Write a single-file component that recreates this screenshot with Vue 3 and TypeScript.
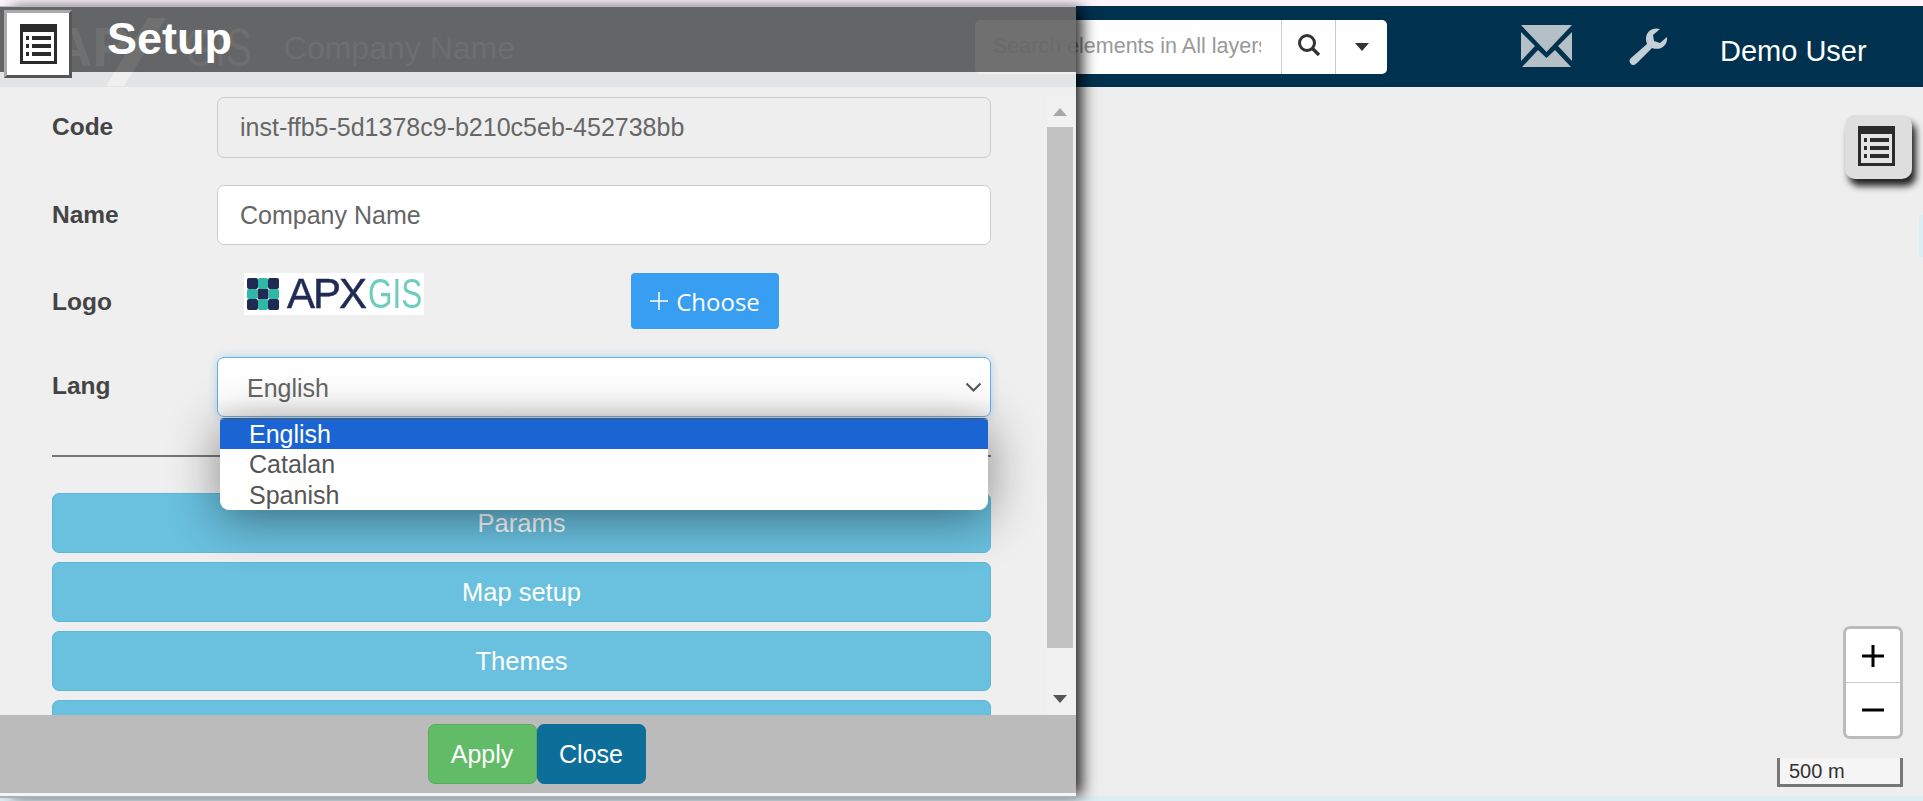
<script setup lang="ts">
const sections: string[] = ['Params', 'Map setup', 'Themes', '']
const languages: string[] = ['English', 'Catalan', 'Spanish']
const selected = 'English'
const iconRows: number[] = [12, 20, 28]
</script>

<template>
  <div class="page">
    <div class="top-strip"></div>
    <header class="navbar">
      <div class="brand">
        <span class="brand-apx">AP</span>
        <svg class="brand-slash" width="60" height="68" viewBox="0 0 60 68"><path d="M0 68 L42 0 H60 L18 68 Z" fill="#fff" /></svg>
        <span class="brand-gis">GIS</span>
        <span class="brand-company">Company Name</span>
      </div>
      <div class="search">
        <input class="search-input" placeholder="Search elements in All layers" />
        <button class="search-btn">
          <svg width="24" height="24" viewBox="0 0 24 24"><circle cx="10" cy="10" r="7.5" fill="none" stroke="#333" stroke-width="3" /><path d="M15.5 15.5 L22 22" stroke="#333" stroke-width="3.4" /></svg>
        </button>
        <button class="search-caret">
          <svg width="14" height="8" viewBox="0 0 14 8"><path d="M0 0 H14 L7 8 Z" fill="#333" /></svg>
        </button>
      </div>
      <svg class="nav-mail" width="51" height="42" viewBox="0 0 51 42">
        <path d="M0 0 H51 L25.5 27 Z" fill="#b4bfc6" />
        <path d="M0 7 L14 21 L0 36 Z M51 7 L37 21 L51 36 Z" fill="#b4bfc6" />
        <path d="M1 42 L17 25 L25.5 33 L34 25 L50 42 Z" fill="#b4bfc6" />
      </svg>
      <svg class="nav-wrench" width="39" height="37" viewBox="0 0 39 37">
        <path d="M38 9 L31 15 L25 13 L24 7 L31 1 C24 -1 17 3 17 11 C17 13 17.5 14.5 18 16 L2 30 C0 32 0 34 2 36 C4 38 6 37 8 35 L23 20 C31 23 39 18 38 9 Z" fill="#c5d0d6" />
      </svg>
      <span class="nav-user">Demo User</span>
    </header>

    <main class="map">
      <button class="float-btn">
        <svg width="37" height="40" viewBox="0 0 37 40">
          <rect width="37" height="40" fill="#2b2b2b" />
          <rect x="3" y="8" width="31" height="29" fill="#e4e4e4" />
          <template v-for="y in iconRows" :key="y">
            <rect x="6" :y="y" width="3" height="4" fill="#2b2b2b" />
            <rect x="12" :y="y" width="19" height="4" fill="#2b2b2b" />
          </template>
        </svg>
      </button>
      <div class="zoom-ctl">
        <button class="zoom-btn">
          <svg width="22" height="22" viewBox="0 0 22 22"><path d="M0 11 H22 M11 0 V22" stroke="#000" stroke-width="3" /></svg>
        </button>
        <button class="zoom-btn zoom-out">
          <svg width="22" height="4" viewBox="0 0 22 4"><path d="M0 2 H22" stroke="#000" stroke-width="3" /></svg>
        </button>
      </div>
      <div class="scale-line">500 m</div>
      <div class="edge-tick"></div>
    </main>
    <div class="bottom-strip"></div>

    <section class="panel">
      <div class="panel-head">
        <div class="head-icon">
          <svg width="37" height="40" viewBox="0 0 37 40">
            <rect width="37" height="40" fill="#2b2b2b" />
            <rect x="3" y="8" width="31" height="29" fill="#fff" />
            <template v-for="y in iconRows" :key="y">
              <rect x="6" :y="y" width="3" height="4" fill="#2b2b2b" />
              <rect x="12" :y="y" width="19" height="4" fill="#2b2b2b" />
            </template>
          </svg>
        </div>
        <h1 class="head-title">Setup</h1>
      </div>

      <div class="panel-body">
        <div class="form">
          <div class="row">
            <label class="row-label row-label-code">Code</label>
            <input class="field field-off" value="inst-ffb5-5d1378c9-b210c5eb-452738bb" readonly />
          </div>
          <div class="row row-name">
            <label class="row-label">Name</label>
            <input class="field" value="Company Name" />
          </div>
          <div class="row row-logo">
            <label class="row-label">Logo</label>
            <div class="logo-wrap">
              <div class="logo">
                <svg class="logo-mark" width="32" height="32" viewBox="0 0 32 32">
                  <g fill="#1f2a55">
                    <rect x="0" y="0" width="11" height="11" rx="2" />
                    <rect x="21" y="0" width="11" height="11" rx="2" />
                    <rect x="10.5" y="10.5" width="11" height="11" rx="2" />
                    <rect x="0" y="21" width="11" height="11" rx="2" />
                    <rect x="21" y="21" width="11" height="11" rx="2" />
                  </g>
                  <g fill="#2fb8a6">
                    <rect x="11" y="0" width="10" height="11" rx="2" />
                    <rect x="0" y="11" width="10.5" height="10" rx="2" />
                    <rect x="21.5" y="11" width="10.5" height="10" rx="2" />
                    <rect x="11" y="21" width="10" height="11" rx="2" />
                  </g>
                </svg>
                <span class="logo-apx">APX</span>
                <span class="logo-gis">GIS</span>
              </div>
              <button class="choose">
                <svg width="18" height="18" viewBox="0 0 18 18"><path d="M0 9 H18 M9 0 V18" stroke="#fff" stroke-width="1.5" /></svg>
                <span>Choose</span>
              </button>
            </div>
          </div>
          <div class="row">
            <label class="row-label row-label-lang">Lang</label>
            <div class="select-wrap">
              <div class="select">
                <span class="select-text">{{ selected }}</span>
                <svg width="17" height="10" viewBox="0 0 17 10"><path d="M1.5 1.5 L8.5 8.5 L15.5 1.5" fill="none" stroke="#555" stroke-width="2" /></svg>
              </div>
              <ul class="options">
                <li v-for="lang in languages" :key="lang" class="option" :class="{ active: lang === selected }">{{ lang }}</li>
              </ul>
            </div>
          </div>
          <hr class="divider" />
          <div class="sections">
            <button v-for="s in sections" :key="s" class="section-btn">{{ s }}</button>
          </div>
        </div>
        <div class="scrollbar">
          <svg class="arrow-up" width="14" height="8" viewBox="0 0 14 8"><path d="M7 0 L14 8 H0 Z" fill="#a8a8a8" /></svg>
          <div class="thumb"></div>
          <svg class="arrow-down" width="14" height="8" viewBox="0 0 14 8"><path d="M0 0 H14 L7 8 Z" fill="#555" /></svg>
        </div>
      </div>

      <footer class="panel-foot">
        <button class="foot-btn apply">Apply</button>
        <button class="foot-btn close">Close</button>
      </footer>
    </section>
  </div>
</template>

<style>
html, body { margin: 0; overflow: hidden; }
</style>

<style scoped>
.page {
  position: relative;
  width: 1923px;
  height: 801px;
  display: flex;
  flex-direction: column;
  overflow: hidden;
  font-family: "Liberation Sans", Arial, sans-serif;
  background: #dcedf4;
}

.top-strip {
  height: 6px;
  background: #fdf4fd;
}

.navbar {
  height: 81px;
  background: #00314f;
  display: flex;
  align-items: center;
  position: relative;
}

.brand {
  display: flex;
  align-items: center;
  width: 975px;
  flex: none;
  color: #fff;
  padding-left: 52px;
  box-sizing: border-box;
}

.brand-apx {
  font-size: 56px;
  font-weight: bold;
  line-height: 1;
}

.brand-slash {
  margin: 10px 0 0 -24px;
}

.brand-gis {
  font-size: 54px;
  line-height: 1;
  margin-left: 19px;
  width: 99px;
  color: #ccc;
  transform: scaleX(0.72);
  transform-origin: left center;
}

.brand-company {
  font-size: 32px;
  color: #ccc;
  margin-top: 4px;
}

.search {
  width: 412px;
  height: 54px;
  display: flex;
  background: #fff;
  border-radius: 5px;
  flex: none;
}

.search-input {
  width: 307px;
  box-sizing: border-box;
  border: 0;
  border-right: 1px solid #ccc;
  outline: none;
  background: transparent;
  font: 21.5px "Liberation Sans", Arial, sans-serif;
  padding: 0 20px 0 18px;
  color: #555;
}

.search-input::placeholder {
  color: #999;
}

.search-btn,
.search-caret {
  border: 0;
  padding: 0;
  background: transparent;
  display: flex;
  align-items: center;
  justify-content: center;
}

.search-btn {
  width: 54px;
  border-right: 1px solid #ccc;
  padding-bottom: 4px;
}

.search-caret {
  flex: 1;
}

.nav-mail {
  margin-left: 134px;
  margin-top: -1px;
}

.nav-wrench {
  margin-left: 57px;
  margin-top: 0;
}

.nav-user {
  margin-left: 52px;
  margin-top: 10px;
  font-size: 29px;
  color: #fff;
}

.map {
  flex: none;
  height: 709px;
  background: #eee;
  position: relative;
}

.float-btn {
  position: absolute;
  left: 1845px;
  top: 28px;
  width: 67px;
  height: 64px;
  border: 0;
  padding: 0 5px 3px 0;
  box-sizing: border-box;
  border-radius: 10px;
  background: #dedede;
  box-shadow: 4px 7px 7px #222;
  display: flex;
  align-items: center;
  justify-content: center;
}

.zoom-ctl {
  position: absolute;
  left: 1843px;
  top: 539px;
  width: 60px;
  height: 113px;
  box-sizing: border-box;
  border: 3px solid #bbb;
  border-radius: 7px;
  background: #fff;
  display: flex;
  flex-direction: column;
}

.zoom-btn {
  flex: 1;
  border: 0;
  padding: 0;
  background: transparent;
  display: flex;
  align-items: center;
  justify-content: center;
}

.zoom-out {
  border-top: 1px solid #ccc;
}

.scale-line {
  position: absolute;
  left: 1777px;
  top: 671px;
  width: 126px;
  height: 29px;
  box-sizing: border-box;
  border: 3px solid #777;
  border-top: 0;
  background: #f5f5f5;
  font-size: 20px;
  line-height: 26px;
  padding-left: 9px;
  color: #333;
}

.edge-tick {
  position: absolute;
  right: 0;
  top: 128px;
  width: 4px;
  height: 42px;
  background: #dcedf4;
}

.bottom-strip {
  flex: 1;
}

.panel {
  position: absolute;
  left: 0;
  top: 6px;
  width: 1076px;
  height: 792px;
  display: flex;
  flex-direction: column;
  border-top: 1px solid #bbb;
  border-bottom: 2px solid #aab2b6;
  box-sizing: border-box;
  box-shadow: 9px 0 14px -3px rgba(0, 0, 0, 0.85);
}

.panel-head {
  height: 65px;
  flex: none;
  display: flex;
  align-items: flex-start;
  background: rgba(104, 104, 104, 0.95);
  position: relative;
}

.head-icon {
  position: absolute;
  left: 4px;
  top: 3px;
  width: 68px;
  height: 68px;
  box-sizing: border-box;
  background: #fff;
  border: 3px outset #aaa;
  display: flex;
  align-items: center;
  justify-content: center;
  z-index: 1;
}

.head-title {
  margin: 7px 0 0 107px;
  font-size: 45px;
  line-height: 50px;
  font-weight: bold;
  color: #fff;
}

.panel-body {
  flex: none;
  height: 643px;
  display: flex;
  overflow: hidden;
  background: rgba(238, 238, 238, 0.95);
}

.form {
  width: 1047px;
  flex: none;
  box-sizing: border-box;
  padding: 25px 56px 0 52px;
  overflow: hidden;
}

.row {
  display: flex;
  align-items: center;
  margin-bottom: 27px;
}

.row-name {
  margin-bottom: 28px;
}

.row-logo {
  align-items: flex-start;
  margin-bottom: 28px;
}

.row-label {
  width: 165px;
  flex: none;
  font-size: 24.5px;
  font-weight: bold;
  color: #444;
}

.row-label-code {
  margin-top: -2px;
}

.row-logo .row-label {
  padding-top: 15px;
}

.row-label-lang {
  margin-top: -3px;
}

.field {
  flex: 1;
  height: 61px;
  box-sizing: border-box;
  border: 1px solid #ccc;
  border-radius: 7px;
  background: #fff;
  padding: 0 22px;
  font: 25px "Liberation Sans", Arial, sans-serif;
  color: #666;
  outline: none;
  min-width: 0;
}

.field-off {
  background: #eee;
}

.row-name .field {
  height: 60px;
}

.logo-wrap {
  flex: 1;
  display: flex;
  align-items: flex-start;
  padding-left: 27px;
  gap: 207px;
}

.logo {
  width: 180px;
  height: 42px;
  flex: none;
  background: #fff;
  display: flex;
  align-items: center;
  padding-left: 3px;
  box-sizing: border-box;
  filter: blur(0.6px);
  font-size: 42px;
  line-height: 42px;
}

.logo-mark {
  flex: none;
  margin-right: 8px;
}

.logo-apx {
  width: 81px;
  flex: none;
  color: #1f2a55;
  letter-spacing: -2px;
  -webkit-text-stroke: 0.5px #1f2a55;
}

.logo-gis {
  width: 54px;
  flex: none;
  color: #6fcdbd;
  transform: scaleX(0.75);
  transform-origin: left center;
}

.choose {
  width: 148px;
  height: 56px;
  border: 0;
  border-radius: 4px;
  background: #389ef2;
  color: #fff;
  font: 24px "Open Sans", sans-serif;
  display: flex;
  align-items: center;
  justify-content: center;
  gap: 8px;
  padding: 0;
}

.select-wrap {
  flex: 1;
  position: relative;
  z-index: 2;
}

.select {
  height: 60px;
  box-sizing: border-box;
  border: 1px solid #66afe9;
  border-radius: 7px;
  background: linear-gradient(#fff 70%, #f4f4f4);
  box-shadow: 0 0 10px rgba(102, 175, 233, 0.45);
  display: flex;
  align-items: center;
  justify-content: space-between;
  padding: 0 8px 0 29px;
  font-size: 25px;
  color: #666;
}

.select-text {
  margin-top: 2px;
}

.options {
  position: absolute;
  left: 3px;
  right: 3px;
  top: 61px;
  margin: 0;
  padding: 0;
  list-style: none;
  background: #fff;
  border-radius: 4px 4px 9px 9px;
  border-top: 1px solid #555;
  box-shadow: 0 8px 50px rgba(0, 0, 0, 0.45);
  overflow: hidden;
}

.option {
  height: 30.3px;
  line-height: 30px;
  padding-left: 29px;
  font-size: 25px;
  color: #555;
}

.option.active {
  background: #1a65d3;
  color: #fff;
}

.divider {
  margin: 38px 0 36px;
  height: 2px;
  border: 0;
  background: #777;
}

.sections {
  display: flex;
  flex-direction: column;
  gap: 9px;
}

.section-btn {
  height: 60px;
  flex: none;
  border: 1px solid #5fb6d6;
  border-radius: 7px;
  background: #69c0df;
  color: #fff;
  font: 25.5px "Liberation Sans", Arial, sans-serif;
  padding: 0;
}

.scrollbar {
  flex: none;
  width: 28px;
  margin-top: 25px;
  background: #f1f1f1;
  position: relative;
  box-sizing: border-box;
}

.arrow-up {
  position: absolute;
  left: 6px;
  top: 11px;
}

.arrow-down {
  position: absolute;
  left: 6px;
  bottom: 12px;
}

.thumb {
  position: absolute;
  left: 0;
  top: 30px;
  width: 26px;
  height: 521px;
  background: #c2c2c2;
}

.panel-foot {
  flex: 1;
  background: #bbb;
  display: flex;
  justify-content: center;
  padding: 9px 3px 0 0;
  box-sizing: border-box;
  border-bottom: 3px solid #f4f6f6;
}

.foot-btn {
  width: 109px;
  height: 60px;
  border-radius: 7px;
  color: #fff;
  font: 25px "Liberation Sans", Arial, sans-serif;
  padding: 0;
}

.apply {
  background: #62bb67;
  border: 1px solid #58ac5c;
}

.close {
  background: #0e6e9a;
  border: 1px solid #0e6e9a;
}
</style>
